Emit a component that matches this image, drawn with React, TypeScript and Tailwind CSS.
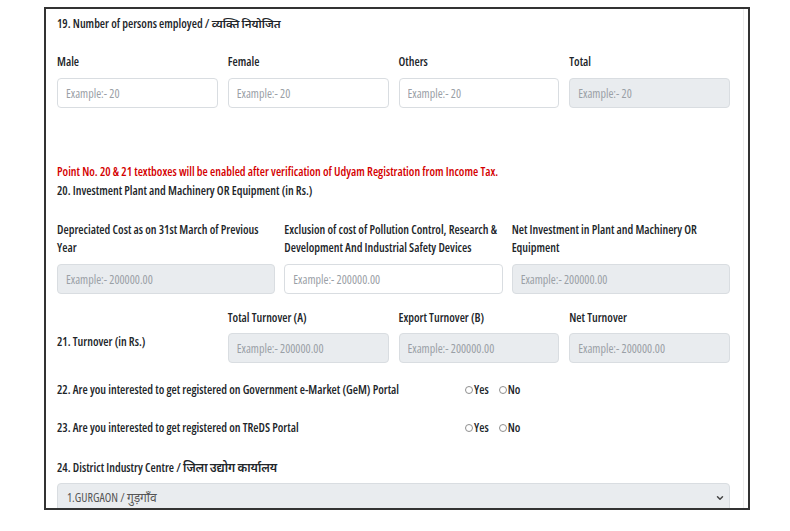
import { ChevronDown } from "lucide-react";

const font = "font-['Open_Sans','Noto_Sans',sans-serif] font-stretch-[75%]";

const Field = ({
  placeholder,
  disabled,
}: {
  placeholder: string;
  disabled?: boolean;
}) => (
  <input
    disabled={disabled}
    placeholder={placeholder}
    className={`h-[30px] w-full rounded-[4px] border border-[#d9dde1] px-[8px] text-[12px] placeholder:text-[#9aa0a6] ${
      disabled ? "bg-[#e9ecef]" : "bg-white"
    }`}
  />
);

const Radio = ({ label }: { label: string }) => (
  <label className="flex items-center gap-[1px]">
    <span className="h-[8px] w-[8px] rounded-full border border-[#8f8f8f] bg-white" />
    <span className="font-semibold">{label}</span>
  </label>
);

export default function App() {
  return (
    <div className={`${font} min-h-screen bg-white pl-[44px] pt-[7px] text-[12px] text-[#212529]`}>
      <div className="h-[503px] w-[706px] overflow-hidden border-2 border-[#333]">
        <div className="h-full w-[698px] border-r border-[#ececec] pl-[11px] pr-[13px] pt-[6px]">
          <h3 className="font-semibold leading-[18px]">
            19. Number of persons employed / <span className="text-[11.5px]">व्यक्ति नियोजित</span>
          </h3>

          <div className="mt-[20px] grid grid-cols-4 gap-x-[10px]">
            {["Male", "Female", "Others", "Total"].map((l, i) => (
              <div key={l}>
                <div className="mb-[7px] font-semibold leading-[18px]">{l}</div>
                <Field placeholder="Example:- 20" disabled={i === 3} />
              </div>
            ))}
          </div>

          <p className="mt-[54px] font-semibold leading-[19px] text-[#d40000]">
            Point No. 20 &amp; 21 textboxes will be enabled after verification of Udyam Registration from Income Tax.
          </p>
          <p className="font-semibold leading-[19px]">
            20. Investment Plant and Machinery OR Equipment (in Rs.)
          </p>

          <div className="mt-[21px] grid grid-cols-3 gap-x-[9px]">
            {[
              ["Depreciated Cost as on 31st March of Previous Year", true],
              ["Exclusion of cost of Pollution Control, Research & Development And Industrial Safety Devices", false],
              ["Net Investment in Plant and Machinery OR Equipment", true],
            ].map(([l, d]) => (
              <div key={l as string}>
                <div className="mb-[7px] h-[36px] font-semibold leading-[18px]">{l as string}</div>
                <Field placeholder="Example:- 200000.00" disabled={d as boolean} />
              </div>
            ))}
          </div>

          <div className="mt-[15px] grid grid-cols-4 gap-x-[10px]">
            <div className="pt-[24px] font-semibold leading-[18px]">21. Turnover (in Rs.)</div>
            {["Total Turnover (A)", "Export Turnover (B)", "Net Turnover"].map((l) => (
              <div key={l}>
                <div className="mb-[6px] font-semibold leading-[18px]">{l}</div>
                <Field placeholder="Example:- 200000.00" disabled />
              </div>
            ))}
          </div>

          <div className="mt-[18px] flex items-center leading-[18px]">
            <div className="w-[408px] font-semibold">
              22. Are you interested to get registered on Government e-Market (GeM) Portal
            </div>
            <div className="flex gap-[10px]">
              <Radio label="Yes" />
              <Radio label="No" />
            </div>
          </div>

          <div className="mt-[20px] flex items-center leading-[18px]">
            <div className="w-[408px] font-semibold">23. Are you interested to get registered on TReDS Portal</div>
            <div className="flex gap-[10px]">
              <Radio label="Yes" />
              <Radio label="No" />
            </div>
          </div>

          <h3 className="mt-[22px] font-semibold leading-[18px]">
            24. District Industry Centre / <span className="text-[12px]">जिला उद्योग कार्यालय</span>
          </h3>
          <div className="mt-[6px] flex h-[30px] items-center justify-between rounded-[4px] border border-[#d9dde1] bg-[#e9ecef] pl-[9px] pr-[4px]">
            <span className="text-[#555]">1.GURGAON / गुड़गाँव</span>
            <ChevronDown size={10} strokeWidth={3.5} className="text-[#444]" />
          </div>
        </div>
      </div>
    </div>
  );
}
